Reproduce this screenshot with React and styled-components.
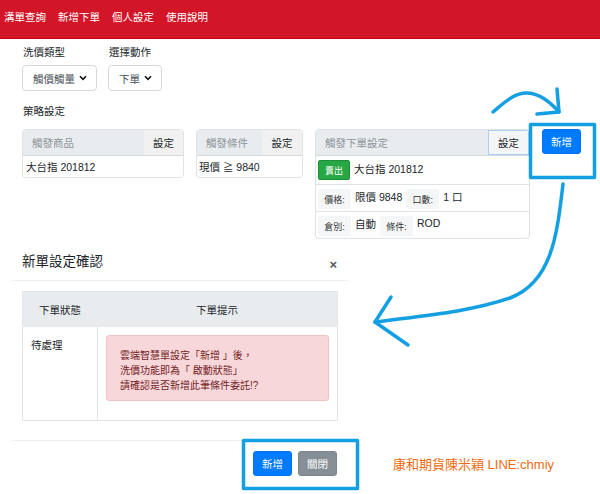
import React from "react";
import styled, { createGlobalStyle } from "styled-components";

const GlobalStyle = createGlobalStyle`
  html, body {
    margin: 0;
    padding: 0;
    background: #fff;
  }
  body {
    font-family: "Liberation Sans", "Noto Sans CJK TC", sans-serif;
    color: #212529;
  }
`;

const Page = styled.div`
  position: relative;
  width: 600px;
  height: 494px;
  overflow: hidden;
  font-size: 10.5px;
`;

const Navbar = styled.nav`
  height: 38px;
  background: #d31528;
  border-bottom: 1px solid #c70012;
  display: flex;
  align-items: center;
  gap: 12px;
  padding-left: 4px;
`;

const NavItem = styled.a`
  color: #fff;
  font-size: 10.5px;
  line-height: 14px;
  margin-top: -4px;
`;

const Content = styled.div`
  padding: 0 0 0 22px;
`;

const FilterRow = styled.div`
  display: flex;
  gap: 11px;
  margin-top: 6px;
`;

const Field = styled.div`
  display: flex;
  flex-direction: column;
  gap: 6px;
`;

const Label = styled.div`
  font-size: 10.5px;
  line-height: 14px;
  padding-left: 1px;
`;

const SelectBox = styled.div`
  display: flex;
  align-items: center;
  gap: 4px;
  height: 24px;
  padding: 0 9px 0 10px;
  border: 1px solid #d5d9dd;
  border-radius: 4px;
  color: #495057;
  font-size: 10.5px;
`;

const SectionLabel = styled(Label)`
  margin-top: 13px;
`;

const CardRow = styled.div`
  display: flex;
  align-items: flex-start;
  gap: 12px;
  margin-top: 11px;
`;

const Card = styled.div`
  width: ${(p) => p.$w}px;
  flex-shrink: 0;
  border: 1px solid #dfe2e6;
  border-radius: 4px;
  overflow: hidden;
  box-sizing: border-box;
`;

const CardHead = styled.div`
  display: flex;
  height: 25px;
  border-bottom: 1px solid #d5d9dd;
`;

const HeadInput = styled.div`
  flex: 1;
  display: flex;
  align-items: center;
  padding-left: 9px;
  background: #e9ecef;
  color: #8d9399;
  font-size: 10.5px;
`;

const SetButton = styled.div`
  width: ${(p) => p.$w || 39}px;
  display: flex;
  align-items: center;
  justify-content: center;
  background: ${(p) => (p.$focus ? "#f4f5f6" : "#f1f1f1")};
  color: #212529;
  font-size: 10.5px;
  box-sizing: border-box;
  border: ${(p) => (p.$focus ? "1.5px solid #a9d0f8" : "none")};
`;

const CardBody = styled.div`
  height: 21px;
  display: flex;
  align-items: center;
  padding-left: ${(p) => p.$pl || 3}px;
  font-size: 10.5px;
`;

const OrderRow = styled.div`
  height: ${(p) => p.$h || 27}px;
  display: flex;
  align-items: center;
  gap: 4px;
  padding-left: 2px;
  border-top: ${(p) => (p.$first ? "none" : "1px solid #dfe2e6")};
  box-sizing: border-box;
  font-size: 10.5px;
`;

const Badge = styled.span`
  width: 32px;
  height: 20px;
  display: flex;
  align-items: center;
  justify-content: center;
  background: #28a745;
  border: 1px solid #1e8e3a;
  box-sizing: border-box;
  border-radius: 2px;
  color: #fff;
  font-size: 9px;
`;

const Tag = styled.span`
  width: 33px;
  height: 20px;
  display: flex;
  align-items: center;
  justify-content: center;
  background: #f5f6f7;
  border-radius: 3px;
  font-size: 9px;
  color: #333;
  margin-top: 2px;
`;

const Value = styled.span`
  margin-top: -4px;
`;

const PrimaryButton = styled.button`
  flex-shrink: 0;
  white-space: nowrap;
  height: 25px;
  padding: 0 8px;
  border: 1px solid ${(p) => (p.$gray ? "#7c858e" : "#0071f0")};
  border-radius: 3px;
  background: ${(p) => (p.$gray ? "#868e96" : "#007bff")};
  color: #fff;
  font-family: inherit;
  font-size: 10.5px;
`;

const Bottom = styled.div`
  display: flex;
  align-items: flex-end;
  margin-top: 3px;
`;

const Modal = styled.div`
  width: 334px;
  margin-left: 13px;
`;

const ModalHeader = styled.div`
  display: flex;
  align-items: center;
  justify-content: space-between;
  padding: 10px 10px 8px 9px;
  border-bottom: 1px solid #eceef0;
`;

const ModalTitle = styled.div`
  font-size: 13.5px;
  line-height: 20px;
`;

const CloseX = styled.span`
  font-size: 13px;
  color: #555;
  font-weight: bold;
  margin-top: 4px;
`;

const ModalBody = styled.div`
  padding: 10px 9px 19px 9px;
  border-bottom: 1px solid #eceef0;
`;

const Table = styled.div`
  display: grid;
  grid-template-columns: 74px 1fr;
  border: 1px solid #e3e6e9;
`;

const HeadCell = styled.div`
  height: 35px;
  display: flex;
  align-items: center;
  justify-content: center;
  background: #e9ecef;
  font-size: 10.5px;
`;

const BodyCell = styled.div`
  padding: ${(p) => p.$pad};
  border-left: ${(p) => (p.$line ? "1px solid #e3e6e9" : "none")};
  font-size: 10.5px;
  line-height: 16px;
`;

const Alert = styled.div`
  padding: 12px 10px 7px 13px;
  background: #f8d7da;
  border: 1px solid #f3c1c6;
  border-radius: 3px;
  color: #721c24;
  font-size: 10px;
  line-height: 15px;
`;

const ModalFooter = styled.div`
  display: flex;
  justify-content: flex-end;
  gap: 6px;
  padding: 10px 10px 10px 0;
`;

const Credit = styled.div`
  margin: 0 0 12px 46px;
  color: #f26a12;
  font-size: 13px;
  line-height: 18px;
`;

const Overlay = styled.svg`
  position: absolute;
  left: 0;
  top: 0;
  pointer-events: none;
`;

const Chevron = () => (
  <svg width="8" height="6" viewBox="0 0 8 6">
    <path d="M1 1.2 L4 4.3 L7 1.2" fill="none" stroke="#111" strokeWidth="1.6" />
  </svg>
);

export default function App() {
  const blue = "#159fe3";
  return (
    <Page>
      <GlobalStyle />
      <Navbar>
        <NavItem>溝單查詢</NavItem>
        <NavItem>新增下單</NavItem>
        <NavItem>個人設定</NavItem>
        <NavItem>使用說明</NavItem>
      </Navbar>
      <Content>
        <FilterRow>
          <Field>
            <Label>洗價類型</Label>
            <SelectBox>
              觸價觸量 <Chevron />
            </SelectBox>
          </Field>
          <Field>
            <Label>選擇動作</Label>
            <SelectBox>
              下單 <Chevron />
            </SelectBox>
          </Field>
        </FilterRow>
        <SectionLabel>策略設定</SectionLabel>
        <CardRow>
          <Card $w={162}>
            <CardHead>
              <HeadInput>觸發商品</HeadInput>
              <SetButton>設定</SetButton>
            </CardHead>
            <CardBody>大台指 201812</CardBody>
          </Card>
          <Card $w={107}>
            <CardHead>
              <HeadInput>觸發條件</HeadInput>
              <SetButton $w={40}>設定</SetButton>
            </CardHead>
            <CardBody $pl={2}>現價 ≧ 9840</CardBody>
          </Card>
          <Card $w={215}>
            <CardHead>
              <HeadInput>觸發下單設定</HeadInput>
              <SetButton $w={41} $focus>設定</SetButton>
            </CardHead>
            <OrderRow $first $h={28}>
              <Badge>賣出</Badge>
              <Value>大台指 201812</Value>
            </OrderRow>
            <OrderRow>
              <Tag>價格:</Tag>
              <Value>限價 9848</Value>
              <Tag>口數:</Tag>
              <Value>1 口</Value>
            </OrderRow>
            <OrderRow>
              <Tag>倉別:</Tag>
              <Value>自動</Value>
              <Tag>條件:</Tag>
              <Value>ROD</Value>
            </OrderRow>
          </Card>
          <PrimaryButton>新增</PrimaryButton>
        </CardRow>
      </Content>
      <Bottom>
        <Modal>
          <ModalHeader>
            <ModalTitle>新單設定確認</ModalTitle>
            <CloseX>×</CloseX>
          </ModalHeader>
          <ModalBody>
            <Table>
              <HeadCell>下單狀態</HeadCell>
              <HeadCell>下單提示</HeadCell>
              <BodyCell $pad="10px 8px">待處理</BodyCell>
              <BodyCell $line $pad="8px 8px 19px 8px">
                <Alert>
                  雲端智慧單設定「新增 」後，
                  <br />
                  洗價功能即為「 啟動狀態」
                  <br />
                  請確認是否新增此筆條件委託!?
                </Alert>
              </BodyCell>
            </Table>
          </ModalBody>
          <ModalFooter>
            <PrimaryButton>新增</PrimaryButton>
            <PrimaryButton $gray>關閉</PrimaryButton>
          </ModalFooter>
        </Modal>
        <Credit>康和期貨陳米穎 LINE:chmiy</Credit>
      </Bottom>
      <Overlay width="600" height="494" viewBox="0 0 600 494">
        <g fill="none" stroke={blue} strokeWidth="3.5" strokeLinecap="round" strokeLinejoin="round">
          <rect x="530.5" y="124.5" width="64" height="53" />
          <rect x="243.5" y="440.5" width="114" height="48" />
          <path d="M493 112 C505 102 515 92 528 93 C542 94 552 104 559 112" />
          <path d="M557 89 L559 112 L537 114" />
          <path d="M563 184 C557 235 552 282 510 298 C470 312 420 316 375 322" />
          <path d="M391 297 L375 322 L408 345" />
        </g>
      </Overlay>
    </Page>
  );
}
